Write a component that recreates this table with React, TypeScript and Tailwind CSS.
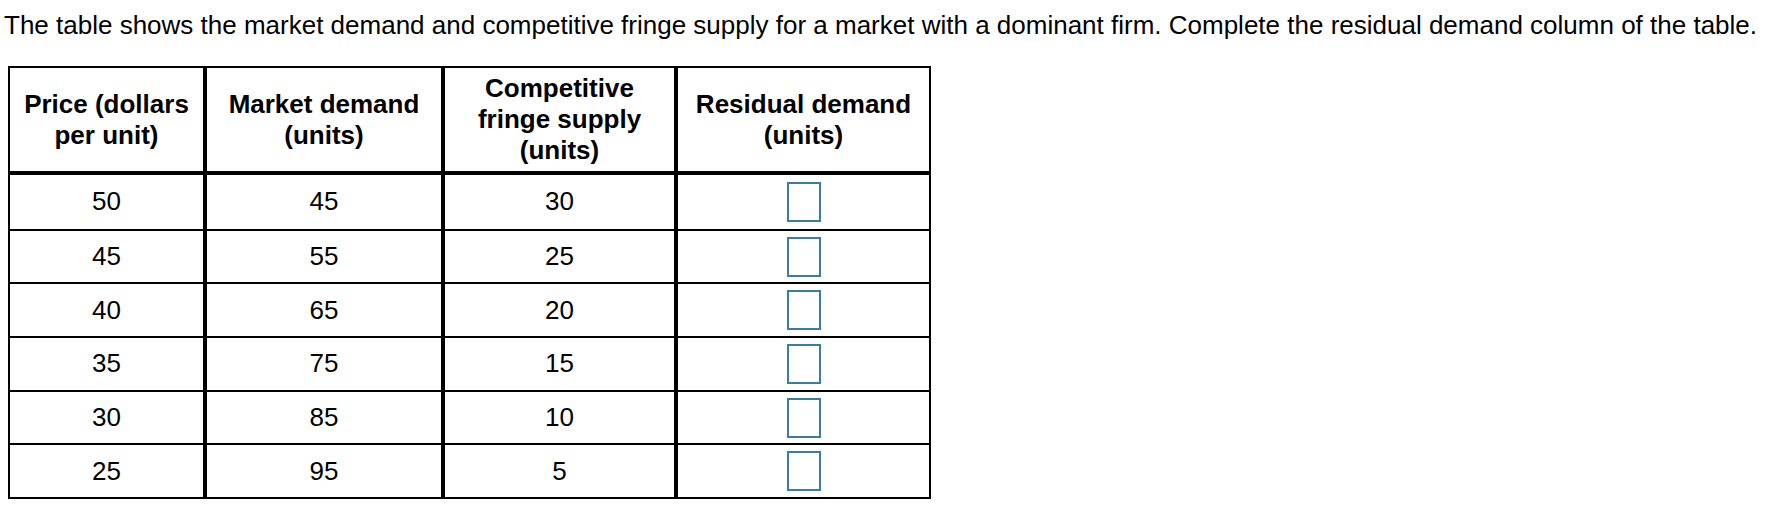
import React from 'react';

const rows: [number, number, number][] = [
  [50, 45, 30],
  [45, 55, 25],
  [40, 65, 20],
  [35, 75, 15],
  [30, 85, 10],
  [25, 95, 5],
];

const AnswerBox: React.FC = () => (
  <input
    type="text"
    aria-label="Residual demand"
    className="w-[34px] h-[40px] border-2 border-[#3a7d9c] bg-white outline-none"
  />
);

const App: React.FC = () => {
  return (
    <div className="w-[1792px] h-[512px] bg-white text-black font-['Liberation_Sans',Arial,sans-serif]">
      <p className="pl-[4px] pt-[10px] text-[26px] leading-[30px]">
        The table shows the market demand and competitive fringe supply for a market with a dominant firm. Complete the residual demand column of the table.
      </p>

      <div className="ml-[8px] mt-[26px] w-[923px] border-2 border-black">
        {/* header */}
        <div className="grid grid-cols-[193px_238px_233px_255px] h-[107px] border-b-4 border-black font-bold text-[26px] leading-[31px] text-center">
          <div className="flex items-center justify-center">
            <span>Price (dollars<br />per unit)</span>
          </div>
          <div className="flex items-center justify-center border-l-4 border-black">
            <span>Market demand<br />(units)</span>
          </div>
          <div className="flex items-center justify-center border-l-4 border-black">
            <span>Competitive<br />fringe supply<br />(units)</span>
          </div>
          <div className="flex items-center justify-center border-l-4 border-black">
            <span>Residual demand<br />(units)</span>
          </div>
        </div>

        {rows.map(([price, demand, supply], i) => (
          <div
            key={price}
            className={`grid grid-cols-[193px_238px_233px_255px] h-[53.7px] text-[26px] text-center ${i > 0 ? 'border-t-2 border-black' : ''}`}
          >
            <div className="flex items-center justify-center">{price}</div>
            <div className="flex items-center justify-center border-l-4 border-black">{demand}</div>
            <div className="flex items-center justify-center border-l-4 border-black">{supply}</div>
            <div className="flex items-center justify-center border-l-4 border-black">
              <AnswerBox />
            </div>
          </div>
        ))}
      </div>
    </div>
  );
};

export default App;
